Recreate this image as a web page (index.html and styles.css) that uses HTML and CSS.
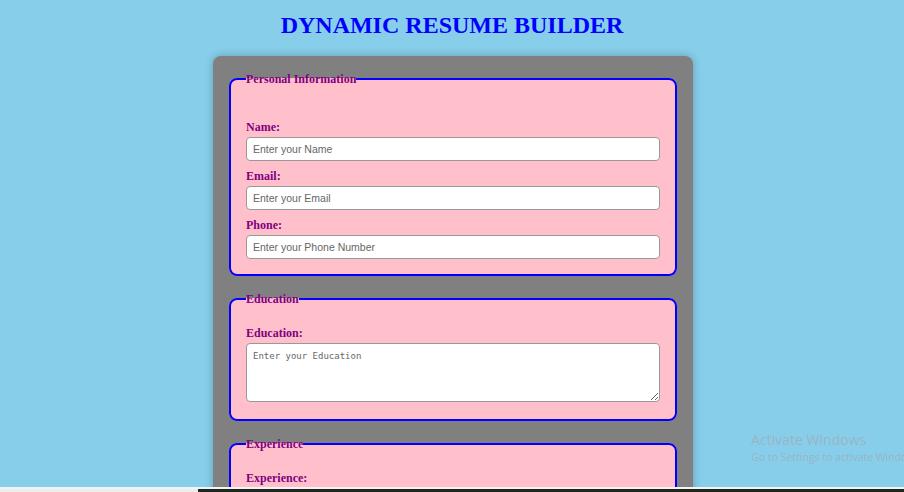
FILE: index.html
```html
<!DOCTYPE html>
<html lang="en">
<head>
<meta charset="utf-8">
<title>Dynamic Resume Builder</title>
<link rel="stylesheet" href="styles.css">
</head>
<body>
  <h1 class="title">DYNAMIC RESUME BUILDER</h1>
  <form class="builder">
    <fieldset class="section section-first">
      <legend class="legend">Personal Information</legend>
      <label class="label" for="name">Name:</label>
      <input class="field" id="name" type="text" placeholder="Enter your Name">
      <label class="label" for="email">Email:</label>
      <input class="field" id="email" type="email" placeholder="Enter your Email">
      <label class="label" for="phone">Phone:</label>
      <input class="field" id="phone" type="tel" placeholder="Enter your Phone Number">
    </fieldset>
    <fieldset class="section">
      <legend class="legend">Education</legend>
      <label class="label" for="education">Education:</label>
      <textarea class="area" id="education" placeholder="Enter your Education"></textarea>
    </fieldset>
    <fieldset class="section">
      <legend class="legend">Experience</legend>
      <label class="label" for="experience">Experience:</label>
      <textarea class="area" id="experience" placeholder="Enter your Experience"></textarea>
    </fieldset>
  </form>
  <div class="watermark">
    <div class="wm-title">Activate Windows</div>
    <div class="wm-sub">Go to Settings to activate Windows.</div>
  </div>
  <div class="taskbar">
    <div class="taskbar-left"></div>
    <div class="taskbar-right"></div>
  </div>
</body>
</html>
```
FILE: styles.css
```css
html, body {
  margin: 0;
  padding: 0;
}
body {
  background: #87ceeb;
  font-family: "Liberation Serif", "Times New Roman", serif;
  height: 492px;
  overflow: hidden;
}
.title {
  margin: 0;
  padding-top: 11px;
  height: 45px;
  box-sizing: border-box;
  text-align: center;
  color: #0000ff;
  font-size: 24px;
  line-height: 28px;
  font-weight: bold;
}
.builder {
  width: 480px;
  margin: 11px auto 0;
  padding: 16px 16px 40px;
  box-sizing: border-box;
  background: #808080;
  border-radius: 8px;
  box-shadow: 0 0 8px rgba(0, 0, 0, 0.25);
  position: relative;
  left: 1px;
}
.section {
  margin: 0 0 16px;
  padding: 20px 15px 7px;
  border: 2px solid #0000ff;
  border-radius: 8px;
  background: #ffc0cb;
  min-width: 0;
}
.section-first {
  padding-top: 34px;
}
.legend {
  padding: 0;
  color: #800080;
  font-weight: bold;
  font-size: 12px;
  line-height: 14px;
}
.label {
  display: block;
  color: #800080;
  font-weight: bold;
  font-size: 12px;
  line-height: 14px;
  margin-bottom: 3px;
}
.field {
  display: block;
  width: 100%;
  height: 24px;
  box-sizing: border-box;
  margin: 0 0 8px;
  padding: 0 6px;
  border: 1px solid #999;
  border-radius: 4px;
  background: #fff;
  font-family: "Liberation Sans", Arial, sans-serif;
  font-size: 10.5px;
}
.field::placeholder {
  color: #666;
}
.area {
  display: block;
  width: 100%;
  height: 59px;
  box-sizing: border-box;
  margin: 0 0 10px;
  padding: 7px 6px 5px;
  border: 1px solid #999;
  border-radius: 4px;
  background: #fff;
  font-family: "DejaVu Sans Mono", "Liberation Mono", monospace;
  font-size: 9px;
  resize: vertical;
}
.area::placeholder {
  color: #666;
}
.watermark {
  position: fixed;
  left: 751px;
  top: 431px;
  color: #9cb2c0;
  font-family: "Open Sans", "Noto Sans", sans-serif;
  white-space: nowrap;
}
.wm-title {
  font-size: 14px;
  line-height: 18px;
}
.wm-sub {
  font-size: 10.5px;
  line-height: 14px;
  margin-top: 1px;
}
.taskbar {
  position: fixed;
  left: 0;
  right: 0;
  bottom: 0;
  height: 3px;
  display: flex;
  border-top: 2px solid #f4f4f4;
  background: #e8e8e8;
}
.taskbar-left {
  width: 198px;
  background: #ededed;
}
.taskbar-right {
  flex: 1;
  background: #1d261f;
}
```
